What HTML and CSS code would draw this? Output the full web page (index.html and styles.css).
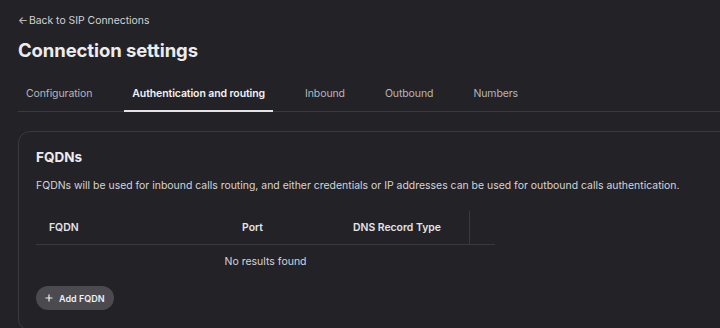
FILE: index.html
```html
<!DOCTYPE html>
<html lang="en">
<head>
<meta charset="utf-8">
<title>Connection settings</title>
<link rel="stylesheet" href="styles.css">
</head>
<body>
<div class="page">
  <a class="back" href="#"><span class="arrow">&larr;</span>Back to SIP Connections</a>
  <h1 class="title">Connection settings</h1>
  <nav class="tabs">
    <span class="tab">Configuration</span>
    <span class="tab active">Authentication and routing</span>
    <span class="tab">Inbound</span>
    <span class="tab">Outbound</span>
    <span class="tab">Numbers</span>
  </nav>
  <section class="card">
    <h2 class="card-title">FQDNs</h2>
    <p class="card-desc">FQDNs will be used for inbound calls routing, and either credentials or IP addresses can be used for outbound calls authentication.</p>
    <div class="table">
      <div class="thead">
        <div class="th col-fqdn">FQDN</div>
        <div class="th col-port">Port</div>
        <div class="th col-dns">DNS Record Type</div>
        <div class="th col-act"></div>
      </div>
      <div class="empty">No results found</div>
    </div>
    <button class="add-btn" type="button">
      <svg class="plus" width="8" height="8" viewBox="0 0 8 8"><path d="M4 0.5v7M0.5 4h7" stroke="currentColor" stroke-width="1.2" fill="none"/></svg>
      Add FQDN
    </button>
  </section>
</div>
</body>
</html>
```
FILE: styles.css
```css
html, body {
  margin: 0;
  padding: 0;
  background: #232227;
  overflow: hidden;
}
body {
  font-family: Inter, "Noto Sans", sans-serif;
  color: #e6e6e8;
}
.page {
  padding: 13px 0 0 18px;
}
.back {
  display: block;
  font-size: 10.4px;
  line-height: 16px;
  color: #d2d2d6;
  text-decoration: none;
}
.back .arrow {
  margin-right: 1px;
}
.title {
  margin: 7px 0 0;
  font-size: 18.5px;
  line-height: 28px;
  font-weight: 700;
  color: #ececee;
  letter-spacing: -0.1px;
}
.tabs {
  display: flex;
  gap: 24px;
  margin-top: 10px;
  border-bottom: 1px solid #3a393e;
}
.tab {
  padding: 12px 8px 8px;
  font-size: 10.5px;
  line-height: 16px;
  letter-spacing: -0.1px;
  color: #b6b6ba;
  margin-bottom: -1px;
  border-bottom: 2px solid transparent;
}
.tab.active {
  color: #f2f2f4;
  font-weight: 600;
  border-bottom-color: #e4e4e6;
}
.card {
  margin: 19px -40px 0 0;
  border: 1px solid #3a393e;
  border-radius: 12px;
  padding: 15px 17px 20px;
}
.card-title {
  margin: 0;
  font-size: 13.5px;
  line-height: 20px;
  font-weight: 700;
  color: #ececee;
}
.card-desc {
  margin: 11px 0 0;
  font-size: 10.45px;
  line-height: 16px;
  color: #d4d4d8;
}
.table {
  width: 459px;
  margin-top: 17px;
}
.thead {
  display: grid;
  grid-template-columns: 193px 111px 130px 25px;
  height: 33px;
  border-bottom: 1px solid #3a393e;
}
.th {
  padding: 0 13px;
  font-size: 10.4px;
  font-weight: 600;
  line-height: 33px;
  color: #e4e4e6;
}
.col-dns {
  border-right: 1px solid #3a393e;
}
.empty {
  height: 32px;
  padding-top: 1px;
  box-sizing: border-box;
  line-height: 32px;
  text-align: center;
  font-size: 10.5px;
  color: #d4d4d8;
}
.add-btn {
  margin-top: 9px;
  display: inline-flex;
  align-items: center;
  gap: 6px;
  height: 24px;
  padding: 0 9px 0 9px;
  border: none;
  border-radius: 12px;
  background: #4a4a4f;
  color: #f0f0f2;
  font-family: Inter, "Noto Sans", sans-serif;
  font-size: 9px;
  font-weight: 600;
}
.plus {
  display: block;
}
```
